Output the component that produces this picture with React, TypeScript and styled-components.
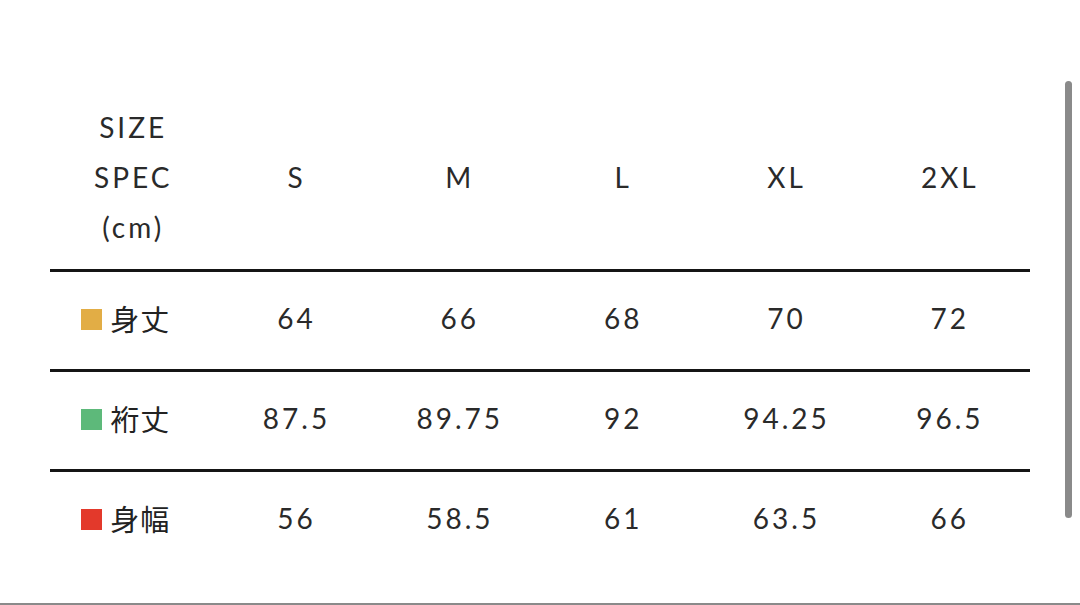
import React from "react";
import styled, { createGlobalStyle } from "styled-components";

const Global = createGlobalStyle`
  html, body { margin: 0; padding: 0; background: #ffffff; }
  body { font-family: Lato, "Noto Sans CJK JP", sans-serif; color: #222; }
`;

const Page = styled.div`
  position: relative;
  width: 1080px;
  height: 605px;
  box-sizing: border-box;
  border-bottom: 2px solid #8a8a8a;
  padding: 102px 0 0 50px;
  overflow: hidden;
`;

const Table = styled.div`
  width: 980px;
  display: flex;
  flex-direction: column;
`;

const HeaderRow = styled.div`
  display: grid;
  grid-template-columns: repeat(6, 1fr);
  align-items: center;
  padding-bottom: 17px;
`;

const Row = styled.div`
  display: grid;
  grid-template-columns: repeat(6, 1fr);
  align-items: center;
  height: 91px;
  padding-bottom: 6px;
  border-top: 3px solid #151515;
`;

const SpecTitle = styled.div`
  display: flex;
  flex-direction: column;
  align-items: center;
  font-size: 28px;
  font-weight: 400;
  line-height: 50px;
  letter-spacing: 3px;
  padding-left: 3px;
  color: #2a2a2a;
`;

const Cell = styled.div`
  text-align: center;
  font-size: 28px;
  font-weight: 400;
  line-height: 40px;
  letter-spacing: 3px;
  padding-left: 3px;
  color: #2a2a2a;
`;

const LabelCell = styled.div`
  display: flex;
  align-items: center;
  justify-content: center;
  gap: 8px;
  padding-right: 12px;
`;

const Swatch = styled.span<{ $color: string }>`
  width: 21px;
  height: 21px;
  background: ${(p) => p.$color};
  flex: none;
  margin-top: 3px;
`;

const LabelText = styled.span`
  font-family: "Noto Sans CJK JP", sans-serif;
  font-size: 29px;
  font-weight: 400;
  line-height: 40px;
  color: #222;
  letter-spacing: 1px;
`;

const ScrollThumb = styled.div`
  position: absolute;
  left: 1065px;
  top: 81px;
  width: 7px;
  height: 437px;
  border-radius: 4px;
  background: #8a8a8a;
`;

const sizes = ["S", "M", "L", "XL", "2XL"];

const rows = [
  { label: "身丈", color: "#E2AD45", values: ["64", "66", "68", "70", "72"] },
  { label: "裄丈", color: "#5DB97A", values: ["87.5", "89.75", "92", "94.25", "96.5"] },
  { label: "身幅", color: "#E3392B", values: ["56", "58.5", "61", "63.5", "66"] },
];

export default function App() {
  return (
    <>
      <Global />
      <Page>
        <Table>
          <HeaderRow>
            <SpecTitle>
              <span>SIZE</span>
              <span>SPEC</span>
              <span>(cm)</span>
            </SpecTitle>
            {sizes.map((s) => (
              <Cell key={s}>{s}</Cell>
            ))}
          </HeaderRow>
          {rows.map((r) => (
            <Row key={r.label}>
              <LabelCell>
                <Swatch $color={r.color} />
                <LabelText>{r.label}</LabelText>
              </LabelCell>
              {r.values.map((v, i) => (
                <Cell key={i}>{v}</Cell>
              ))}
            </Row>
          ))}
        </Table>
        <ScrollThumb />
      </Page>
    </>
  );
}
